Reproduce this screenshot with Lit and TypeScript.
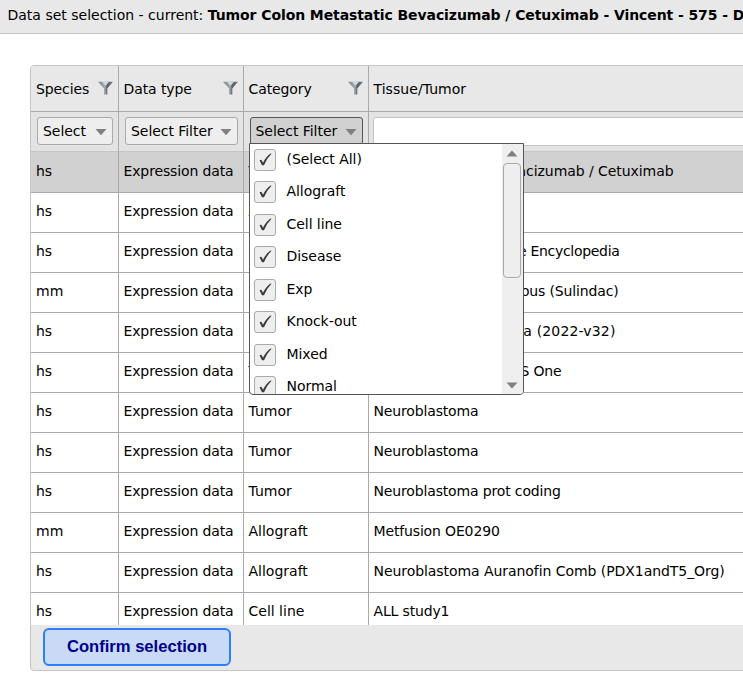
import { LitElement, html, css } from "lit";
import { customElement, state } from "lit/decorators.js";
import { classMap } from "lit/directives/class-map.js";

interface Row { species: string; category: string; tissue: string; end?: number; fit?: "tight" | "loose"; }

const ROWS: Row[] = [
  { species: "hs", category: "Tumor", tissue: "Colon Metastatic Bevacizumab / Cetuximab", end: 300 },
  { species: "hs", category: "Allograft", tissue: "Neuroblastoma" },
  { species: "hs", category: "Cell line", tissue: "Cancer Cell Line Encyclopedia", end: 246, fit: "tight" },
  { species: "mm", category: "Exp", tissue: "Colon Polypous (Sulindac)", end: 245 },
  { species: "hs", category: "Mixed", tissue: "Neuroblastoma (2022-v32)", end: 242, fit: "loose" },
  { species: "hs", category: "Tumor", tissue: "Cell line PLoS One", end: 188 },
  { species: "hs", category: "Tumor", tissue: "Neuroblastoma" },
  { species: "hs", category: "Tumor", tissue: "Neuroblastoma" },
  { species: "hs", category: "Tumor", tissue: "Neuroblastoma prot coding" },
  { species: "mm", category: "Allograft", tissue: "Metfusion OE0290" },
  { species: "hs", category: "Allograft", tissue: "Neuroblastoma Auranofin Comb (PDX1andT5_Org)" },
  { species: "hs", category: "Cell line", tissue: "ALL study1" },
];

const OPTIONS = ["(Select All)", "Allograft", "Cell line", "Disease", "Exp", "Knock-out", "Mixed", "Normal"];

const funnel = html`<svg class="funnel" width="16" height="15" viewBox="0 0 16 15">
  <defs><linearGradient id="g" x1="0" y1="0" x2="1" y2="0">
    <stop offset="0" stop-color="#7d8388"/><stop offset=".45" stop-color="#a0aab2"/><stop offset=".62" stop-color="#5a6067"/><stop offset="1" stop-color="#767c82"/>
  </linearGradient></defs>
  <path d="M0 .8H15L9.300 7.500V13.500H6V7.500Z" fill="url(#g)"/>
  <path d="M4 .8H11L7.500 4.800Z" fill="#d3dbe1"/>
</svg>`;
const arrow = html`<svg class="arrow" width="12" height="7" viewBox="0 0 12 7"><path d="M.5 0H11.500L6 6.200Z" fill="#808080"/></svg>`;

@customElement("app-root")
export class AppRoot extends LitElement {
  @state() private selected = 0;

  static styles = css`
    :host { display: block; height: 687px; overflow: hidden; background: #fff; color: #000;
      font: 14px/20px "DejaVu Sans", sans-serif; white-space: nowrap; }
    * { box-sizing: border-box; }
    .title { height: 34px; padding: 5px 0 0 7.5px; background: #e8e8e8; border-bottom: 1px solid #c5c5c5; overflow: hidden; }
    .title b { letter-spacing: -0.09px; }
    .grid { margin: 31px 0 0 30px; height: 606px; width: 900px; border: 1px solid #c5c5c5; border-radius: 4px;
      background: #e8e8e8; display: flex; flex-direction: column; overflow: hidden; }
    .row { display: grid; grid-template-columns: 88px 125px 125px 1fr; height: 40px; flex: none; background: #fff; }
    .cell { border-right: 1px solid #aaa; border-bottom: 1px solid #aaa; padding: 0 4px 4px 4.5px; display: flex; align-items: center; }
    .cell:first-child { padding-left: 5px; }
    .head { height: 46px; background: #e8e8e8; letter-spacing: -0.1px; }
    .head .cell { justify-content: space-between; padding-bottom: 0; }
    .head .cell:last-child { letter-spacing: 0.05px; }
    .filters { background: #e3e3e3; }
    .filters .cell { padding: 5px 5px 5px 6px; border-bottom-color: #c5c5c5; align-items: flex-start; }
    .filters .cell:last-child { padding-left: 4px; }
    .body { height: 473px; overflow: hidden; background: #fff; }
    .body .row:first-child { height: 41px; }
    .body .row:first-child .cell { padding-top: 1px; }
    .body .selected { background: #d1d1d1; }
    .kind { letter-spacing: -0.13px; }
    .tissue { letter-spacing: -0.15px; }
    .long { letter-spacing: -0.06px; }
    .tight { letter-spacing: -0.3px; }
    .loose { letter-spacing: 0.15px; }
    .select { position: relative; width: 100%; height: 28px; border: 1px solid #aaa; border-radius: 3px; background: #eee;
      display: flex; align-items: center; justify-content: space-between; padding: 0 5px; letter-spacing: -0.05px; }
    .open { background: #d1d1d1; border-color: #555; padding-left: 4.500px; }
    .arrow { display: block; margin-top: 2px; }
    .input { height: 29px; width: 100%; border: 1px solid #c5c5c5; border-radius: 3px; background: #fff; }
    .end { display: flex; justify-content: flex-end; }
    .popup { position: absolute; z-index: 2; left: -2px; top: 25px; width: 275px; height: 252px; border: 1px solid #555;
      border-radius: 0 0 4px 4px; background: #fff; display: flex; overflow: hidden; }
    .options { flex: 1; padding: 5px 0 0 4px; overflow: hidden; }
    .option { height: 32.45px; display: flex; align-items: flex-start; gap: 10.500px; }
    .box { width: 22px; height: 22px; border: 1px solid #aaa; border-radius: 3px; background: #eee; }
    .bar { width: 21px; background: #efefef; display: flex; flex-direction: column; align-items: center; padding: 6px 2px 5px 0; }
    .thumb { width: 18px; height: 115px; margin-top: 6px; border: 1px solid #aaa; border-radius: 4px; background: #eee; flex: none; }
    .down { margin-top: auto; }
    .confirm { margin: 3px 0 0 12px; width: 188px; height: 38px; border: 2px solid #2a7fff; border-radius: 6px;
      background: #c8daf5; color: #00008b; font: bold 16.600px "Liberation Sans", sans-serif; padding: 0; }
  `;

  private select(label: string, open = false) {
    return html`<div class=${classMap({ select: true, open })}><span>${label}</span>${arrow}
      ${open ? html`<div class="popup">
        <div class="options">${OPTIONS.map((o) => html`<div class="option">
          <span class="box"><svg width="20" height="20" viewBox="0 0 20 20"><path d="M4.500 10.300 6.500 9.800 8 12.800Q11 6.500 15.500 3.500L16.500 3.800Q11.800 8.500 9 15.200H7Z" fill="#3c3c3c"/></svg></span>
          <span>${o}</span></div>`)}</div>
        <div class="bar">
          <svg width="12" height="7" viewBox="0 0 12 7"><path d="M.5 6.500H11.500L6 .5Z" fill="#808080"/></svg>
          <div class="thumb"></div>
          <svg class="down" width="12" height="7" viewBox="0 0 12 7"><path d="M.5 .5H11.500L6 6.500Z" fill="#808080"/></svg>
        </div></div>` : ""}
    </div>`;
  }

  private tissue(r: Row) {
    const long = r.tissue.length > 30;
    const classes = { tissue: !long, long, end: !!r.end, tight: r.fit === "tight", loose: r.fit === "loose" };
    return html`<span class=${classMap(classes)} style=${r.end ? `width:${r.end}px` : ""}>${r.tissue}</span>`;
  }

  render() {
    return html`
      <div class="title">Data set selection - current: <b>Tumor Colon Metastatic Bevacizumab / Cetuximab - Vincent - 575 - Dataset</b></div>
      <div class="grid">
        <div class="row head">
          ${["Species", "Data type", "Category"].map((h) => html`<div class="cell"><span>${h}</span>${funnel}</div>`)}
          <div class="cell">Tissue/Tumor</div>
        </div>
        <div class="row filters">
          <div class="cell">${this.select("Select")}</div>
          <div class="cell">${this.select("Select Filter")}</div>
          <div class="cell">${this.select("Select Filter", true)}</div>
          <div class="cell"><div class="input"></div></div>
        </div>
        <div class="body">${ROWS.map((r, i) => html`
          <div class=${classMap({ row: true, selected: i === this.selected })} @click=${() => (this.selected = i)}>
            <div class="cell">${r.species}</div>
            <div class="cell kind">Expression data</div>
            <div class="cell">${r.category}</div>
            <div class="cell">${this.tissue(r)}</div>
          </div>`)}</div>
        <button class="confirm">Confirm selection</button>
      </div>`;
  }
}
